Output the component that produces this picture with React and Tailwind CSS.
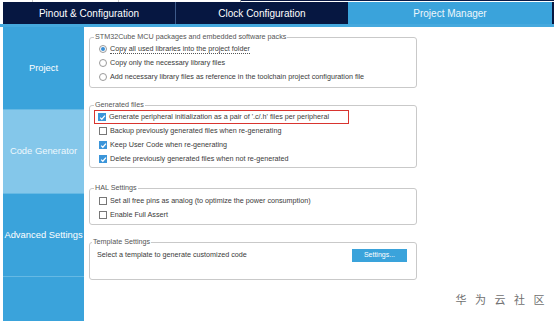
import React from 'react';

const tabs = [
  { label: 'Pinout & Configuration', active: false },
  { label: 'Clock Configuration', active: false },
  { label: 'Project Manager', active: true },
];

const Radio = ({ checked }) => (
  <span className="w-[8px] h-[8px] rounded-full border border-[#9a9a9a] bg-white flex items-center justify-center shrink-0">
    {checked && <span className="w-[4px] h-[4px] rounded-full bg-[#3a8fd6]" />}
  </span>
);

const Check = ({ checked }) =>
  checked ? (
    <span className="w-[8px] h-[8px] bg-[#3b95d9] flex items-center justify-center shrink-0">
      <svg width="7" height="7" viewBox="0 0 8 8">
        <path d="M1.3 4.2 L3.2 6 L6.8 1.8" fill="none" stroke="white" strokeWidth="1.4" />
      </svg>
    </span>
  ) : (
    <span className="w-[8px] h-[8px] border border-[#777] bg-white shrink-0" />
  );

const Row = ({ children, control }) => (
  <div className="h-[14px] flex items-center gap-[3px] whitespace-nowrap">
    {control}
    <span>{children}</span>
  </div>
);

const Group = ({ title, className = '', children }) => (
  <fieldset className={`w-[328px] border border-[#c9c9c9] rounded-[3px] pl-[9px] ${className}`}>
    <legend className="ml-[-5px] px-[1px] text-[#555] leading-[10px]">{title}</legend>
    {children}
  </fieldset>
);

export default function App() {
  return (
    <div className="w-[554px] h-[321px] overflow-hidden bg-white flex flex-col text-[7.2px] text-[#3a3a3a]" style={{ fontFamily: '"Liberation Sans", Arial, sans-serif' }}>
      <div className="h-[2px] flex">
        <div className="w-[33px] border-r border-[#ccc]" />
        <div className="w-[86px] border-r border-[#ccc]" />
        <div className="w-[122px] border-r border-[#aaa]" />
        <div className="flex-1 border-t border-[#0b1a45]" />
      </div>

      <div className="h-[22px] ml-[3px] flex bg-[#061741] text-white text-[10px]">
        {tabs.map((t, i) => (
          <div
            key={t.label}
            className={`flex items-center justify-center ${i === 0 ? 'w-[173px] border-r border-[#3d5a8a]' : ''} ${i === 1 ? 'w-[172px]' : ''} ${t.active ? 'w-[204px] bg-[#3aa3db] text-[#eef7fc]' : ''}`}
          >
            {t.label}
          </div>
        ))}
        <div className="flex-1" />
      </div>
      <div className="h-[3px] bg-[#45a9de]" />

      <div className="flex flex-1 min-h-0">
        <div className="ml-[3px] w-[81px] flex flex-col text-[9.4px] text-white">
          <div className="h-[83px] bg-[#3aa3db] flex items-center justify-center border-b border-[#66b9e4]">Project</div>
          <div className="h-[84px] bg-[#84c7ea] flex items-center justify-center border-b border-[#66b9e4] text-[#eef8fd]">Code Generator</div>
          <div className="h-[83px] bg-[#3aa3db] flex items-center justify-center border-b border-[#66b9e4] whitespace-nowrap">Advanced Settings</div>
          <div className="flex-1 bg-[#3aa3db]" />
        </div>

        <div className="flex-1 pl-[5px] pt-[5px] flex flex-col">
          <Group title="STM32Cube MCU packages and embedded software packs" className="pb-[3px]">
            <Row control={<Radio checked />}>
              <span className="border-b border-dotted border-[#555]">Copy all used libraries into the project folder</span>
            </Row>
            <Row control={<Radio />}>Copy only the necessary library files</Row>
            <Row control={<Radio />}>Add necessary library files as reference in the toolchain project configuration file</Row>
          </Group>

          <Group title="Generated files" className="mt-[12px] pb-[1px]">
            <div className="w-[255px] ml-[-5px] pl-[3px] border border-[#d8342f] h-[14px] flex items-center">
              <Row control={<Check checked />}>Generate peripheral initialization as a pair of '.c/.h' files per peripheral</Row>
            </div>
            <Row control={<Check />}>Backup previously generated files when re-generating</Row>
            <Row control={<Check checked />}>Keep User Code when re-generating</Row>
            <Row control={<Check checked />}>Delete previously generated files when not re-generated</Row>
          </Group>

          <Group title="HAL Settings" className="mt-[15px] pb-[2px]">
            <div className="pt-[1px]">
              <Row control={<Check />}>Set all free pins as analog (to optimize the power consumption)</Row>
              <Row control={<Check />}>Enable Full Assert</Row>
            </div>
          </Group>

          <Group title="Template Settings" className="mt-[12px] pb-[16px] !pl-[7px]">
            <div className="h-[16px] flex items-center justify-between pr-[9px]">
              <span>Select a template to generate customized code</span>
              <button className="w-[55px] h-[13px] bg-[#3aa3db] text-white text-[7px]">Settings...</button>
            </div>
          </Group>

          <div className="mt-auto mb-[14px] mr-[1px] self-end tracking-[8.5px] text-[11px] text-[#6f6f6f]" style={{ fontFamily: '"Noto Sans CJK SC", sans-serif' }}>
            华为云社区
          </div>
        </div>
      </div>
    </div>
  );
}
